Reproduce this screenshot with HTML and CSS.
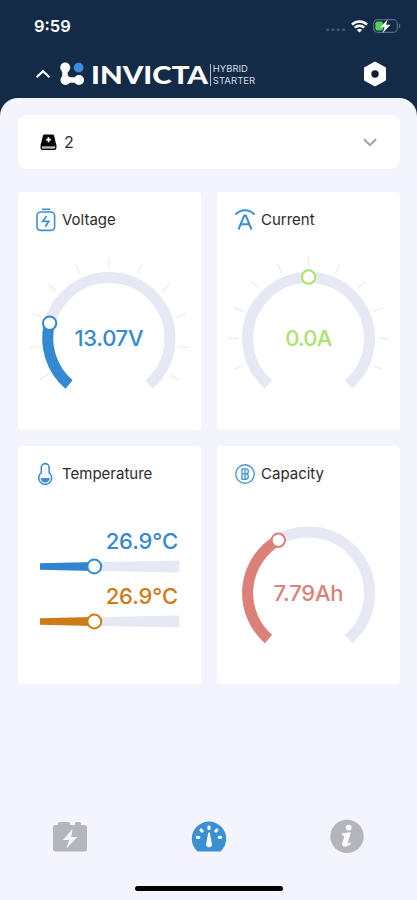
FILE: index.html
```html
<!DOCTYPE html>
<html lang="en">
<head>
    <meta charset="UTF-8">
    <meta name="viewport" content="width=device-width, initial-scale=1.0">
    <title>Invicta Hybrid Starter</title>
    <link rel="stylesheet" href="styles.css">
</head>
<body>
    <div class="status-bar">
        <span class="time">9:59</span>
        <div class="status-icons">
            <svg width="20" height="4" viewBox="0 0 20 4" fill="#44566f">
                <rect x="0" y="0.5" width="3.4" height="2.6" rx="1"/>
                <rect x="5.3" y="0.5" width="3.4" height="2.6" rx="1"/>
                <rect x="10.6" y="0.5" width="3.4" height="2.6" rx="1"/>
                <rect x="15.9" y="0.5" width="3.4" height="2.6" rx="1"/>
            </svg>
            <svg class="wifi" width="17" height="13" viewBox="0 0 17 13" fill="none" stroke="#fff" stroke-width="2.5">
                <path d="M1 4.6a10.8 10.8 0 0 1 15 0"/>
                <path d="M3.8 7.7a6.7 6.7 0 0 1 9.4 0"/>
                <path d="M8.5 12.6L5.9 9.9a3.8 3.8 0 0 1 5.2 0z" fill="#fff" stroke="none"/>
            </svg>
            <svg width="28" height="14" viewBox="0 0 28 14">
                <rect x="0.7" y="0.7" width="23.6" height="12.6" rx="3.8" fill="none" stroke="#586a80" stroke-width="1.2"/>
                <path d="M25.8 4.6c2 .8 2 4 0 4.8z" fill="#586a80"/>
                <rect x="2.4" y="2.4" width="7.6" height="9.2" rx="1.8" fill="#4fd35c"/>
                <path d="M14.8 .3L7.3 8.200h4.3l-2 5.7L17.6 5.800H13z" fill="#fff"/>
            </svg>
        </div>
    </div>

    <header class="header">
        <svg class="caret" width="16" height="10" viewBox="0 0 16 10" fill="none" stroke="#fff" stroke-width="2.2">
            <path d="M1.5 8.3L8 2.2l6.5 6.1"/>
        </svg>
        <svg class="logo" width="26" height="24" viewBox="0 0 26 24">
            <path d="M6 5.4V18h13.500" fill="none" stroke="#fff" stroke-width="5.500"/>
            <g fill="#fff">
                <circle cx="6.2" cy="5.6" r="5"/>
                <circle cx="6.500" cy="18" r="5"/>
                <circle cx="20" cy="18" r="5"/>
            </g>
            <circle cx="19.6" cy="5.6" r="4.9" fill="#3b8ddb"/>
        </svg>
        <svg class="brand" width="170" height="34" viewBox="0 0 170 34">
            <text class="brand-name" x="0" y="26.8" textLength="117" lengthAdjust="spacingAndGlyphs">INVICTA</text>
            <rect x="119" y="7" width="1" height="22" fill="#b5bfcc"/>
            <text class="brand-sub" x="121.8" y="14.700" textLength="35" lengthAdjust="spacingAndGlyphs">HYBRID</text>
            <text class="brand-sub" x="121.8" y="26.500" textLength="42.5" lengthAdjust="spacingAndGlyphs">STARTER</text>
        </svg>
        <svg class="settings" width="24" height="26" viewBox="0 0 24 26">
            <path d="M12 1.7L22 7.2v11.6L12 24.3 2 18.8V7.2z" fill="#fff" stroke="#fff" stroke-width="2" stroke-linejoin="round"/>
            <circle cx="12" cy="13" r="3.7" fill="#0d1c38"/>
        </svg>
    </header>

    <main class="sheet">
        <div class="select">
            <svg width="17" height="17" viewBox="0 0 17 17">
                <path d="M4.500 .5h8c.8 0 1.3.4 1.5 1.1l2.300 9.400H.7l2.300-9.400C3.200.9 3.700.5 4.500 .5z"/>
                <rect x="1.3" y="10" width="14.4" height="5.3" rx="1.5" fill="none" stroke="#000" stroke-width="1.5"/>
                <path d="M2 11.500h13" stroke="#000" stroke-width="2"/>
                <path d="M3 13.600h11" stroke="#aaa" stroke-width="0.9"/>
                <path d="M8.5 3.200v5M6.100 5.700h4.800" stroke="#fff" stroke-width="1.7"/>
            </svg>
            <span class="select-value">2</span>
            <svg width="14" height="9" viewBox="0 0 14 9" fill="none" stroke="#a2a2a4" stroke-width="2">
                <path d="M1 1.2l6 6 6-6"/>
            </svg>
        </div>

        <div class="cards">
            <section class="card">
                <h2 class="card-title">
                    <svg width="20" height="24" viewBox="0 0 20 24" fill="none" stroke="#3c8fd3" stroke-width="1.6">
                        <path d="M6 1.3h8"/>
                        <rect x="1" y="4" width="17.6" height="18.4" rx="3.6"/>
                        <path d="M10.6 8l-3.900 5.300h6.200L9.300 18.500" stroke-width="1.7"/>
                    </svg>
                    Voltage
                </h2>
                <svg class="gauge" viewBox="0 0 183 160">
                    <g class="ticks" id="voltage-ticks"></g>
                    <path class="track" d="M51 134.5A61 61 0 1 1 131 134.5"/>
                    <path class="track blue" d="M51 134.5A61 61 0 0 1 31.6 73"/>
                    <circle class="knob blue" cx="31.6" cy="73.3" r="6.7"/>
                    <text class="value blue-text" x="91" y="96.3" textLength="69">13.07V</text>
                </svg>
            </section>

            <section class="card">
                <h2 class="card-title">
                    <svg width="20" height="24" viewBox="0 0 20 24" fill="none" stroke="#3c8fd3" stroke-width="2">
                        <path d="M.5 6.500C5.500.7 14.500.7 19.500 6.500"/>
                        <path d="M3.500 21.5L9.200 7.600h1.600l5.700 13.900M6 16.300h8"/>
                    </svg>
                    Current
                </h2>
                <svg class="gauge" viewBox="0 0 183 160">
                    <g class="ticks" id="current-ticks"></g>
                    <path class="track" d="M51.5 134.5A61 61 0 1 1 131.5 134.5"/>
                    <circle class="knob green" cx="91.6" cy="27" r="6.7"/>
                    <text class="value green-text" x="91.8" y="96.3" textLength="47">0.0A</text>
                </svg>
            </section>

            <section class="card">
                <h2 class="card-title">
                    <svg width="20" height="24" viewBox="0 0 20 24" fill="none" stroke="#3c8fd3" stroke-width="1.6">
                        <path d="M5.300 10.700V5.500a3.900 3.900 0 0 1 7.800 0v5.200a6.500 6.500 0 1 1-7.800 0z"/>
                        <path d="M4.600 16h9.200a4.600 4.600 0 0 1-9.200 0z" fill="#3c8fd3" stroke="none"/>
                        <path d="M9.200 5v8" stroke="#dcebf7" stroke-width="1.2"/>
                    </svg>
                    Temperature
                </h2>
                <div class="sliders">
                    <div class="slider">
                        <span class="slider-value blue-text">26.9°C</span>
                        <svg width="140" height="17" viewBox="0 0 140 17">
                            <path d="M0 5.2L139.5 2.500v12L0 11.800z" fill="#e6e8f3"/>
                            <path d="M0 5.2L54.5 4.100v8.800L0 11.800z" fill="#2f86cf"/>
                            <circle class="knob blue" cx="54.3" cy="8.5" r="6.9"/>
                        </svg>
                    </div>
                    <div class="slider">
                        <span class="slider-value orange-text">26.9°C</span>
                        <svg width="140" height="17" viewBox="0 0 140 17">
                            <path d="M0 5.2L139.5 2.500v12L0 11.800z" fill="#e6e8f3"/>
                            <path d="M0 5.2L54.5 4.100v8.800L0 11.800z" fill="#cd7b19"/>
                            <circle class="knob orange" cx="54.3" cy="8.5" r="6.9"/>
                        </svg>
                    </div>
                </div>
            </section>

            <section class="card">
                <h2 class="card-title">
                    <svg width="20" height="24" viewBox="0 0 20 24" fill="none" stroke="#4b99da" stroke-width="1.4">
                        <circle cx="10" cy="12" r="9.3"/>
                        <path d="M7 6.900h3.800q2.500 0 2.500 2.500t-2.500 2.500q2.500 0 2.500 2.700t-2.500 2.700H7zM7 11.900h4M10 6.900v10.400"/>
                    </svg>
                    Capacity
                </h2>
                <svg class="gauge" viewBox="0 0 183 160">
                    <path class="track" d="M51.5 135A61 61 0 1 1 131.5 135"/>
                    <path class="track red" d="M51.5 135A61 61 0 0 1 61.5 36"/>
                    <circle class="knob red" cx="61.3" cy="36.2" r="6.7"/>
                    <text class="value red-text" x="91.500" y="97" textLength="70">7.79Ah</text>
                </svg>
            </section>
        </div>

        <nav class="tabs">
            <svg width="36" height="34" viewBox="0 0 36 34">
                <path d="M3.500 5H6V3.500Q6 2 7.500 2h9Q18 2 18 3.500V5h5V3.500Q23 2 24.500 2h3Q29 2 29 3.500V5h3.500Q35 5 35 7.500V29q0 2.500-2.500 2.500h-29Q1 31.500 1 29V7.500Q1 5 3.500 5z" fill="#b4b6bb"/>
                <path d="M20.500 9L11 20h6l-2.500 8.500L25.500 17h-6.200z" fill="#f3f4fd"/>
            </svg>
            <svg width="36" height="34" viewBox="0 0 36 34">
                <path d="M6.500 31.500A17.200 17.200 0 1 1 29.500 31.500z" fill="#3b8fd3"/>
                <g fill="#fff">
                    <rect x="16.5" y="5.500" width="3" height="4.400" rx="1"/>
                    <rect x="16.5" y="5.500" width="3" height="4.400" rx="1" transform="rotate(-42 18 18.7)"/>
                    <rect x="16.5" y="5.500" width="3" height="4.400" rx="1" transform="rotate(42 18 18.7)"/>
                    <rect x="16.5" y="5.500" width="3" height="4.400" rx="1" transform="rotate(-83 18 18.7)"/>
                    <rect x="16.5" y="5.500" width="3" height="4.400" rx="1" transform="rotate(83 18 18.7)"/>
                    <path d="M17.300 12.500h1.400l2.200 11.800a2.900 2.900 0 1 1-5.800 0z"/>
                </g>
            </svg>
            <svg class="info-icon" width="36" height="34" viewBox="0 0 36 34">
                <circle cx="18" cy="16.400" r="16.7" fill="#b4b6bb"/>
                <circle cx="19.700" cy="7.600" r="2.800" fill="#fff"/>
                <path d="M13.200 13.200l8.700-1-3.200 10.300q-.4 1.600 1 .8l1.500-1.200.8 1c-2.200 3-4.400 3.800-6.500 3.500-2.200-.3-2.700-1.900-2.100-3.900l1.700-5.400q.4-1.700-1.900-1.900z" fill="#fff"/>
            </svg>
        </nav>
        <div class="home-indicator"></div>
    </main>

    <script>
        function drawTicks(id, cx, step) {
            let lines = "";
            for (let i = -5; i <= 5; i++) {
                lines += `<path d="M${cx} 7.5v10" transform="rotate(${i * step} ${cx} 88)"/>`;
            }
            document.getElementById(id).innerHTML = lines;
        }

        drawTicks("voltage-ticks", 91, 24.2);
        drawTicks("current-ticks", 91.5, 22.6);
    </script>
</body>
</html>
```
FILE: styles.css
```css
* {
    box-sizing: border-box;
}

body {
    margin: 0;
    height: 900px;
    display: flex;
    flex-direction: column;
    overflow: hidden;
    background: #142b47;
    font-family: Inter, "Liberation Sans", sans-serif;
    color: #2b2b2e;
}

svg {
    display: block;
    flex: none;
    overflow: visible;
}

.status-bar {
    display: flex;
    justify-content: space-between;
    align-items: center;
    height: 52px;
    padding: 0 16px 0 34px;
}

.time {
    color: #fff;
    font-size: 16.5px;
    font-weight: 600;
}

.status-icons {
    display: flex;
    align-items: center;
    gap: 5px;
}

.status-icons svg:first-child {
    margin-top: 8px;
}

/* header */
.header {
    display: flex;
    align-items: center;
    height: 46px;
    padding: 0 30px 2px 35px;
}

.logo {
    margin-left: 8px;
}

.brand {
    margin-left: 6px;
}

.brand-name {
    font-family: Lato, sans-serif;
    font-size: 25px;
    font-weight: 900;
    fill: #fff;
}

.brand-sub {
    font-size: 9.4px;
    fill: #d3dae3;
}

.settings {
    margin-left: auto;
}

.sheet {
    flex: 1;
    display: flex;
    flex-direction: column;
    padding: 17px 17px 0 18px;
    background: #f3f4fd;
    border-radius: 18px 18px 0 0;
}

.select {
    display: flex;
    align-items: center;
    height: 54px;
    padding: 0 23px 0 22px;
    background: #fff;
    border-radius: 9px;
}

.select-value {
    flex: 1;
    margin-left: 7px;
    font-size: 16px;
}

/* cards */
.cards {
    display: grid;
    grid-template-columns: 183px 183px;
    grid-auto-rows: 238px;
    gap: 16px;
    margin-top: 23px;
}

.card {
    background: #fff;
    border-radius: 4px;
}

.card-title {
    display: flex;
    align-items: center;
    gap: 6px;
    height: 58px;
    margin: 0;
    padding: 0 0 3px 18px;
    font-size: 15px;
    font-weight: 400;
}

.gauge {
    width: 183px;
    height: 160px;
}

.ticks {
    stroke: #ececf0;
    stroke-width: 1.3;
}

.track {
    fill: none;
    stroke: #e6e8f3;
    stroke-width: 11;
}

.knob {
    fill: #fff;
    stroke-width: 2;
}

.blue {
    stroke: #3489d0;
}

.green {
    stroke: #a9e36f;
}

.red {
    stroke: #dc807a;
}

.orange {
    stroke: #cd7b19;
}

.value {
    font-size: 22px;
    font-weight: 500;
    text-anchor: middle;
}

.blue-text {
    color: #3489d0;
    fill: #3489d0;
}

.green-text {
    fill: #a9e36f;
}

.red-text {
    fill: #dc807a;
}

.orange-text {
    color: #cd7b19;
}

.sliders {
    display: flex;
    flex-direction: column;
    gap: 8px;
    padding: 24px 21px 0 22px;
}

.slider-value {
    display: block;
    height: 30px;
    padding-right: 2px;
    line-height: 26px;
    text-align: right;
    font-size: 22px;
    font-weight: 500;
    letter-spacing: -0.1px;
}

/* bottom tabs */
.tabs {
    display: flex;
    justify-content: space-between;
    margin-top: 136px;
    padding: 0 35px 0 34px;
}

.home-indicator {
    width: 148px;
    height: 5px;
    margin: 32px auto 0;
    background: #000;
    border-radius: 3px;
}
```
